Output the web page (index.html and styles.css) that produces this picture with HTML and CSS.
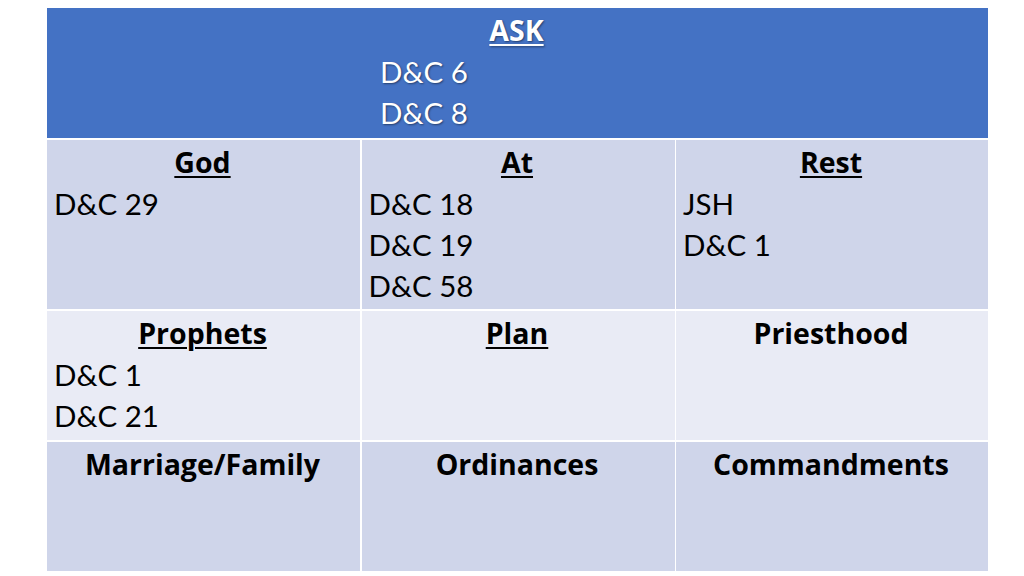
FILE: index.html
```html
<!DOCTYPE html>
<html>
<head>
<meta charset="utf-8">
<link rel="stylesheet" href="styles.css">
</head>
<body>
<div class="table">
  <div class="cell head">
    <div class="title"><span class="u">ASK</span></div>
    <div class="refs">
      <div class="line">D&amp;C 6</div>
      <div class="line">D&amp;C 8</div>
    </div>
  </div>

  <div class="cell dark">
    <div class="title"><span class="u">God</span></div>
    <div class="line">D&amp;C 29</div>
  </div>
  <div class="cell dark">
    <div class="title"><span class="u">At</span></div>
    <div class="line">D&amp;C 18</div>
    <div class="line">D&amp;C 19</div>
    <div class="line">D&amp;C 58</div>
  </div>
  <div class="cell dark">
    <div class="title"><span class="u">Rest</span></div>
    <div class="line">JSH</div>
    <div class="line">D&amp;C 1</div>
  </div>

  <div class="cell light">
    <div class="title"><span class="u">Prophets</span></div>
    <div class="line">D&amp;C 1</div>
    <div class="line">D&amp;C 21</div>
  </div>
  <div class="cell light">
    <div class="title"><span class="u">Plan</span></div>
  </div>
  <div class="cell light">
    <div class="title">Priesthood</div>
  </div>

  <div class="cell dark">
    <div class="title">Marriage/Family</div>
  </div>
  <div class="cell dark">
    <div class="title">Ordinances</div>
  </div>
  <div class="cell dark">
    <div class="title">Commandments</div>
  </div>
</div>
</body>
</html>
```

FILE: styles.css
```css
html, body {
  margin: 0;
  padding: 0;
  background: #ffffff;
}

body {
  width: 1024px;
  height: 576px;
  overflow: hidden;
}

.table {
  margin: 8px 0 0 47px;
  width: 942px;
  display: grid;
  grid-template-columns: 313px 313px 312px;
  grid-template-rows: 130px 169px 129px 129px;
  gap: 2px 1.5px;
  background: #ffffff;
}

.cell {
  padding: 2px 9px 0 7px;
  box-sizing: border-box;
  color: #000000;
}

.head {
  grid-column: 1 / 4;
  background: #4472c4;
  color: #ffffff;
  text-shadow: 1px 1px 2px rgba(0, 0, 0, 0.45);
}

.dark {
  background: #cfd5ea;
}

.light {
  background: #e9ebf5;
}

.title {
  font-family: "Open Sans", "Noto Sans", sans-serif;
  font-weight: 700;
  font-size: 28.5px;
  line-height: 41px;
  text-align: center;
}

.u {
  text-decoration: underline;
  text-decoration-thickness: 2px;
  text-underline-offset: 3px;
}

.line {
  font-family: "Lato", sans-serif;
  font-size: 29.5px;
  line-height: 41px;
}

.refs {
  padding-left: 326px;
}
```
